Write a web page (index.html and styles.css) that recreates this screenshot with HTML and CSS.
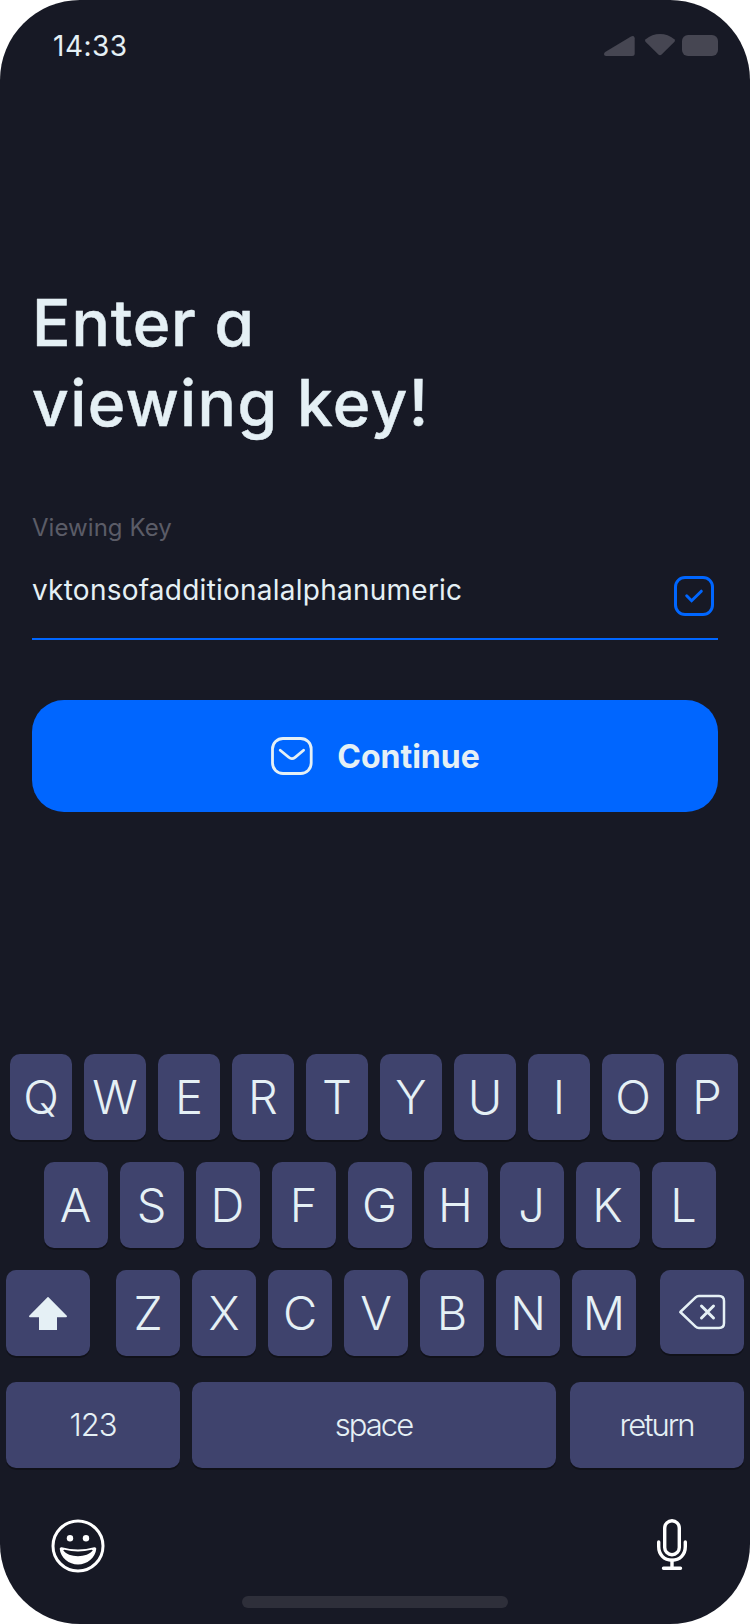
FILE: index.html
```html
<!DOCTYPE html>
<html lang="en">
<head>
<meta charset="utf-8">
<title>Viewing key</title>
<link rel="stylesheet" href="styles.css">
</head>
<body>
<div class="screen">
  <header class="status">
    <span class="time">14:33</span>
    <svg class="status-icons" width="114" height="24" viewBox="604 33 114 24">
      <path d="M606 56Q604 56 604 54.200Q604 52.800 605.200 52L631 36.600Q632.600 35.700 633.700 36.300Q634.700 37 634.700 38.500V53.500Q634.700 56 632.200 56Z"/>
      <path d="M645.500 41.800Q644.400 40.500 645.700 39.300Q652 34 660 34T674.300 39.300Q675.600 40.500 674.500 41.800L661.600 54.500Q660 55.800 658.400 54.500Z"/>
      <rect x="682" y="35" width="36" height="21" rx="6"/>
    </svg>
  </header>
  <main class="form">
    <h1 class="title"><span class="line-one">Enter a</span><br><span class="line-two">viewing key!</span></h1>
    <div class="label">Viewing Key</div>
    <div class="field">
      <span class="value">vktonsofadditionalalphanumeric</span>
      <svg class="check" width="40" height="40" viewBox="0 0 40 40">
        <rect x="1.500" y="1.500" width="37" height="37" rx="9.500"/>
        <path d="M12.700 19.800L17.600 24.700L27.300 15.200"/>
      </svg>
    </div>
    <button class="continue" type="button">
      <svg class="mail" width="42" height="38" viewBox="0 0 42 38">
        <rect x="1.500" y="1.500" width="38.700" height="35" rx="10.500"/>
        <path d="M9.200 13.200L17.700 20.300Q20.900 22.900 24.100 20.300L32.600 13.200"/>
      </svg>
      <span class="continue-text">Continue</span>
    </button>
  </main>
  <section class="keyboard">
    <div class="row row-top">
      <span class="key">Q</span><span class="key">W</span><span class="key">E</span><span class="key">R</span><span class="key">T</span><span class="key">Y</span><span class="key">U</span><span class="key">I</span><span class="key">O</span><span class="key">P</span>
    </div>
    <div class="row row-home">
      <span class="key">A</span><span class="key">S</span><span class="key">D</span><span class="key">F</span><span class="key">G</span><span class="key">H</span><span class="key">J</span><span class="key">K</span><span class="key">L</span>
    </div>
    <div class="row row-bottom">
      <span class="key shift"><svg width="84" height="86" viewBox="0 0 84 86"><path d="M42 26.700L61 46Q61 47.300 60 47.300H51V60H33V47.300H24Q23 47.300 23 46Z"/></svg></span>
      <span class="key">Z</span><span class="key">X</span><span class="key">C</span><span class="key">V</span><span class="key">B</span><span class="key">N</span><span class="key">M</span>
      <span class="key delete"><svg width="84" height="84" viewBox="0 0 84 84"><path d="M20.300 42L35.600 27.300Q37 26 39 26H59Q64 26 64 31V53Q64 58 59 58H39Q37 58 35.600 56.700Z"/><path class="cross" d="M41.500 36L53.500 48M53.500 36L41.500 48"/></svg></span>
    </div>
    <div class="row row-space">
      <span class="key word">123</span><span class="key word space">space</span><span class="key word return">return</span>
    </div>
  </section>
  <footer class="tools">
    <svg width="54" height="54" viewBox="0 0 54 54">
      <circle class="ring" cx="27" cy="27" r="25"/>
      <circle cx="19" cy="19.300" r="3.200"/><circle cx="35" cy="19.300" r="3.200"/>
      <path fill-rule="evenodd" d="M8.700 29.800Q8.700 28 10.700 28.200Q27 32.600 43.300 28.200Q45.300 28 45.300 29.800C44.500 39 36 45.500 27 45.500S9.500 39 8.700 29.800ZM12.200 31.300C14.500 35.200 21 37.200 27 37.200S39.500 35.200 41.800 31.300Q41.300 30.700 40.500 30.800Q27 34.200 13.500 30.800Q12.700 30.700 12.200 31.300Z"/>
    </svg>
    <svg class="mic" width="32" height="52" viewBox="0 0 32 52">
      <rect x="8.700" y="1.700" width="14.600" height="34" rx="7.300"/>
      <path d="M2.700 23V27.500C2.700 35.500 8 41.200 16 41.200S29.300 35.500 29.300 27.500V23M16 41V49M7.500 49.300H24.500"/>
    </svg>
  </footer>
  <div class="home-bar"></div>
</div>
</body>
</html>
```
FILE: styles.css
```css
body {
  margin: 0;
  background: #fff;
  font-family: Inter, "Liberation Sans", sans-serif;
}

.screen {
  box-sizing: border-box;
  width: 750px;
  height: 1624px;
  display: flex;
  flex-direction: column;
  border-radius: 80px;
  background: #171925;
  color: #e5f0f5;
  overflow: hidden;
}

.screen > * { flex-shrink: 0; }

.status {
  display: flex;
  justify-content: space-between;
  align-items: flex-start;
  height: 233px;
  padding: 33px 32px 0 53px;
}

.time {
  font-size: 28px;
  line-height: 26px;
  letter-spacing: 0.5px;
}

.status-icons { fill: #464652; }

.form {
  display: flex;
  flex-direction: column;
  height: 788px;
  padding: 0 32px;
}

.title {
  margin: 17px 0 0;
  font-size: 64px;
  font-weight: 500;
  line-height: 80px;
  font-feature-settings: "cv11", "ss03";
  -webkit-text-stroke: 0.5px #e5f0f5;
  white-space: nowrap;
}

.line-one { letter-spacing: 0.8px; }
.line-two { letter-spacing: 1.4px; }

.label {
  margin: 68px 0 1px;
  font-size: 24px;
  line-height: 34px;
  letter-spacing: 0.05px;
  color: #5b5c67;
}

.field {
  display: flex;
  justify-content: space-between;
  align-items: flex-start;
  box-sizing: border-box;
  height: 94px;
  padding: 30px 4px 0 0;
  border-bottom: 2px solid #0066ff;
}

.value {
  font-size: 28px;
  line-height: 28px;
  letter-spacing: 0.24px;
}

.check {
  fill: none;
  stroke: #0066ff;
  stroke-width: 3;
  stroke-linecap: round;
}

.continue {
  display: flex;
  justify-content: center;
  align-items: center;
  gap: 24px;
  height: 112px;
  margin-top: 60px;
  padding: 0 0 0 1px;
  border: 0;
  border-radius: 32px;
  background: #0066ff;
  color: #e5f0f5;
  font: 700 32px/40px Inter, sans-serif;
}

.continue-text { padding-top: 2px; }

.mail {
  fill: none;
  stroke: #e5f0f5;
  stroke-width: 2.800;
  stroke-linecap: round;
}

.keyboard {
  display: flex;
  flex-direction: column;
  gap: 22px;
}

.row {
  display: flex;
  gap: 12px;
}

.row-top { padding-left: 10px; }
.row-home { padding-left: 43.5px; }
.row-bottom { padding-left: 6px; }
.row-space { padding-left: 6px; margin-top: 4px; }

.key {
  width: 64px;
  height: 86px;
  border-radius: 10px;
  background: #3f436d;
  box-shadow: 0 2px 0 rgba(0, 0, 0, 0.3);
  font-size: 47px;
  font-weight: 300;
  line-height: 86px;
  text-align: center;
}

.row-top .key { width: 62px; }

.key svg { display: block; }

.row .shift {
  width: 84px;
  margin-right: 14px;
  fill: #e5f0f5;
}

.row .delete {
  width: 84px;
  height: 84px;
  margin-left: 12px;
  fill: none;
  stroke: #e5f0f5;
  stroke-width: 2.500;
  stroke-linejoin: round;
  stroke-linecap: round;
}

.row .delete .cross { stroke-width: 3; }

.row .word {
  width: 174px;
  font-size: 31px;
  line-height: 86px;
  letter-spacing: -1px;
}

.row .space {
  width: 364px;
  letter-spacing: -2px;
  text-indent: -1px;
}

.row .return {
  margin-left: 2px;
  letter-spacing: -2px;
  text-indent: -1px;
}

.tools {
  display: flex;
  justify-content: space-between;
  height: 77px;
  padding: 51px 62px 0 51px;
  fill: #fff;
}

.ring, .mic {
  fill: none;
  stroke: #fff;
  stroke-width: 3;
}

.mic {
  stroke-width: 3.400;
  stroke-linecap: round;
}

.home-bar {
  align-self: center;
  width: 266px;
  height: 12px;
  border-radius: 6px;
  background: #2e2f3a;
}
```
